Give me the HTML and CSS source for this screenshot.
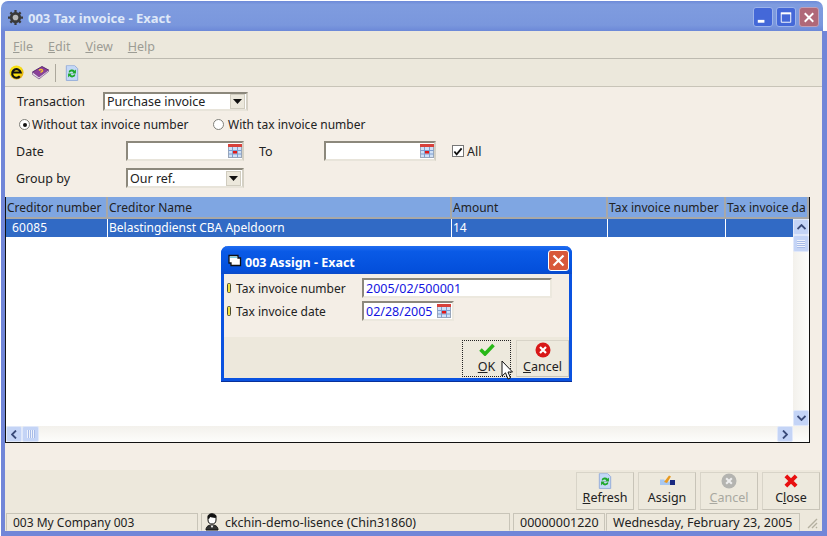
FILE: index.html
```html
<!DOCTYPE html>
<html lang="en">
<head>
<meta charset="utf-8">
<title>003 Tax invoice - Exact</title>
<link rel="stylesheet" href="styles.css">
</head>
<body>
<svg class="defs" width="0" height="0" aria-hidden="true">
  <defs>
    <symbol id="cal" viewBox="0 0 14 14">
      <rect x="0.5" y="0.5" width="13" height="13" fill="#cfe0f6" stroke="#9aa6b8"/>
      <rect x="0" y="0" width="14" height="3" fill="#d8413a"/>
      <path d="M0.5 6.5H13.5M0.5 10H13.5M4.5 3V13.5M9.5 3V13.5" stroke="#7f9fd0" fill="none"/>
      <rect x="5" y="7" width="4" height="2.5" fill="#e01818"/>
    </symbol>
    <symbol id="arrow" viewBox="0 0 9 5"><path d="M0 0H9L4.500 5Z" fill="#111"/></symbol>
    <symbol id="refresh" viewBox="0 0 16 18">
      <path d="M1.500 0.500H11L14.500 4V17.500H1.500Z" fill="#c4d8f6" stroke="#8fa8d8"/>
      <path d="M4 8A4 4 0 0 1 11 6.500L12.500 5V9.500H8L9.500 8A2.500 2.500 0 0 0 5.500 8.500Z" fill="#1fa82c"/>
      <path d="M12 11A4 4 0 0 1 5 12.500L3.500 14V9.500H8L6.500 11A2.500 2.500 0 0 0 10.500 10.500Z" fill="#1fa82c"/>
    </symbol>
    <symbol id="pin" viewBox="0 0 4 10"><rect x="0.500" y="0.500" width="3" height="9" rx="1" fill="#f2e23c" stroke="#4a4a30"/></symbol>
  </defs>
</svg>

<div class="desktop">
  <section class="window">
    <header class="titlebar">
      <svg class="app-icon" width="15" height="15" viewBox="0 0 16 16"><circle cx="8" cy="8" r="6" fill="#3a3a3a"/><path d="M8 0V16M0 8H16M2.500 2.500L13.500 13.500M13.500 2.500L2.500 13.500" stroke="#3a3a3a" stroke-width="2.400"/><circle cx="8" cy="8" r="3" fill="#b8b8b8"/></svg>
      <span class="title-text">003 Tax invoice - Exact</span>
      <div class="win-buttons">
        <button class="win-btn"><svg width="19" height="19" viewBox="0 0 19 19"><rect x="4" y="12" width="7" height="3" fill="#fff"/></svg></button>
        <button class="win-btn"><svg width="19" height="19" viewBox="0 0 19 19"><path d="M4.500 5.500H14.500V14.500H4.500Z" fill="none" stroke="#fff"/><rect x="4" y="4" width="11" height="2" fill="#fff"/></svg></button>
        <button class="win-btn win-close"><svg width="19" height="19" viewBox="0 0 19 19"><path d="M5 5L14 14M14 5L5 14" stroke="#fff" stroke-width="2"/></svg></button>
      </div>
    </header>

    <div class="window-body">
      <nav class="menubar">
        <span class="menu-item"><u>F</u>ile</span>
        <span class="menu-item"><u>E</u>dit</span>
        <span class="menu-item"><u>V</u>iew</span>
        <span class="menu-item"><u>H</u>elp</span>
      </nav>

      <div class="toolbar">
        <svg class="tool-e" width="15" height="15" viewBox="0 0 16 16"><defs><radialGradient id="ball" cx="40%" cy="35%" r="70%"><stop offset="0.6" stop-color="#f8e010"/><stop offset="1" stop-color="#e0a010"/></radialGradient></defs><circle cx="8" cy="8" r="7.500" fill="url(#ball)"/><path d="M2.500 8H12.500A4.600 4.600 0 1 0 11.500 12" fill="none" stroke="#111" stroke-width="2.200"/></svg>
        <svg class="tool-book" width="17" height="15" viewBox="0 0 17 15"><path d="M0.500 7L10 1.500L16.500 5L7 13.500Z" fill="#8b3f98" stroke="#5a2a70"/><path d="M0.500 7V9.500L7 14L16.500 6.500V5L7 12Z" fill="#e9d8ec" stroke="#6a3a80" stroke-width="0.600"/><path d="M7 5.500C8 4 11 4 10.500 6L8.500 7.500" fill="none" stroke="#f0c030" stroke-width="1.400"/></svg>
        <span class="tool-sep"></span>
        <svg width="14" height="16" viewBox="0 0 16 18"><use href="#refresh"/></svg>
      </div>

      <form class="filters">
        <div class="row row-transaction">
          <label class="lbl lbl-trans">Transaction</label>
          <div class="combo combo-trans"><span class="combo-val">Purchase invoice</span><span class="combo-btn"><svg width="9" height="5"><use href="#arrow"/></svg></span></div>
        </div>
        <div class="row row-radio">
          <span class="radio radio-on"></span><span class="radio-text radio-text-1">Without tax invoice number</span>
          <span class="radio radio-second"></span><span class="radio-text">With tax invoice number</span>
        </div>
        <div class="row row-date">
          <label class="lbl lbl-date">Date</label>
          <div class="date-in date-main"><svg width="14" height="14"><use href="#cal"/></svg></div>
          <label class="lbl lbl-to">To</label>
          <div class="date-in date-second"><svg width="14" height="14"><use href="#cal"/></svg></div>
          <span class="check"><svg width="11" height="11" viewBox="0 0 11 11"><path d="M1.500 5.500L4 8.500L9.500 2" fill="none" stroke="#111" stroke-width="2"/></svg></span>
          <span class="check-text">All</span>
        </div>
        <div class="row row-group">
          <label class="lbl lbl-date">Group by</label>
          <div class="combo combo-group"><span class="combo-val">Our ref.</span><span class="combo-btn"><svg width="9" height="5"><use href="#arrow"/></svg></span></div>
        </div>
      </form>

      <div class="grid">
        <div class="grid-head">
          <div class="th">Creditor number</div>
          <div class="th">Creditor Name</div>
          <div class="th">Amount</div>
          <div class="th">Tax invoice number</div>
          <div class="th">Tax invoice da</div>
        </div>
        <div class="grid-row">
          <div class="td td-first">60085</div>
          <div class="td">Belastingdienst CBA Apeldoorn</div>
          <div class="td">14</div>
          <div class="td"></div>
          <div class="td"></div>
        </div>
        <div class="vscroll">
          <span class="sb-btn"><svg width="9" height="6" viewBox="0 0 9 6"><path d="M0.500 5L4.500 1L8.500 5" fill="none" stroke="#3a4a78" stroke-width="1.800"/></svg></span>
          <span class="sb-thumb sb-thumb-v"></span>
          <span class="sb-fill"></span>
          <span class="sb-btn"><svg width="9" height="6" viewBox="0 0 9 6"><path d="M0.500 1L4.500 5L8.500 1" fill="none" stroke="#3a4a78" stroke-width="1.800"/></svg></span>
        </div>
        <div class="hscroll">
          <span class="sb-btn"><svg width="6" height="9" viewBox="0 0 6 9"><path d="M5 0.500L1 4.500L5 8.500" fill="none" stroke="#3a4a78" stroke-width="1.800"/></svg></span>
          <span class="sb-thumb sb-thumb-h"></span>
          <span class="sb-fill"></span>
          <span class="sb-btn"><svg width="6" height="9" viewBox="0 0 6 9"><path d="M1 0.500L5 4.500L1 8.500" fill="none" stroke="#3a4a78" stroke-width="1.800"/></svg></span>
        </div>
      </div>

      <div class="actions">
        <button class="act-btn"><svg width="14" height="16" viewBox="0 0 16 18"><use href="#refresh"/></svg><span><u>R</u>efresh</span></button>
        <button class="act-btn"><svg width="17" height="16" viewBox="0 0 17 16"><path d="M1 12V6.500H5L7 8.500H12V12Z" fill="#a8c8f0"/><path d="M5 9L10 2.500L12 3.500L8 10Z" fill="#e89a20"/><rect x="11" y="7" width="5" height="5" fill="#1a2a80"/></svg><span>Assi<u>g</u>n</span></button>
        <button class="act-btn act-disabled"><svg width="16" height="16" viewBox="0 0 17 17"><circle cx="8.500" cy="8.500" r="8" fill="#b4b4b0"/><path d="M5.500 5.500L11.500 11.500M11.500 5.500L5.500 11.500" stroke="#eee" stroke-width="2.200"/></svg><span><u>C</u>ancel</span></button>
        <button class="act-btn"><svg width="14" height="14" viewBox="0 0 15 15"><path d="M2 2L13 13M13 2L2 13" stroke="#e81010" stroke-width="4.200"/></svg><span>C<u>l</u>ose</span></button>
      </div>

      <footer class="statusbar">
        <div class="panel panel-company">003 My Company 003</div>
        <div class="panel panel-user">
          <svg width="16" height="18" viewBox="0 0 16 18"><path d="M4 3C5 0 11 0 12 3V7C12 10 10 11 8 11C6 11 4 10 4 7Z" fill="#fff" stroke="#111"/><path d="M4 6C3 1 7 0.500 9 1C12 1 13 4 11.500 5C9 5 7 4 6 4C6 5 5 6 4 6Z" fill="#111"/><path d="M2 17C2 13 5 12 8 12C11 12 14 13 14 17Z" fill="#333" stroke="#111"/><path d="M6.500 12.500L8 15L9.500 12.500Z" fill="#fff"/></svg>
          <span>ckchin-demo-lisence (Chin31860)</span>
        </div>
        <div class="panel panel-code">00000001220</div>
        <div class="panel panel-date">Wednesday, February 23, 2005</div>
        <svg class="grip" width="13" height="13" viewBox="0 0 13 13"><path d="M12 3L3 12M12 7L7 12M12 11L11 12" stroke="#b4b0a0" stroke-width="1.400"/></svg>
      </footer>
    </div>
  </section>

  <section class="dialog">
    <header class="dlg-title">
      <svg width="14" height="13" viewBox="0 0 14 13"><path d="M1 1.500H10V4H12.500V11.500H3V9H1Z" fill="#fff" stroke="#111" stroke-width="1.300"/><rect x="2" y="2.500" width="7" height="1.500" fill="#7fd0e0"/></svg>
      <span class="dlg-title-text">003 Assign - Exact</span>
      <button class="dlg-close"><svg width="15" height="15" viewBox="0 0 15 15"><path d="M2.500 2.500L12.500 12.500M12.500 2.500L2.500 12.500" stroke="#fff" stroke-width="2.200"/></svg></button>
    </header>
    <div class="dlg-body">
      <div class="dlg-row">
        <svg class="pin" width="4" height="10"><use href="#pin"/></svg>
        <label class="dlg-label">Tax invoice number</label>
        <div class="dlg-input dlg-input-wide">2005/02/500001</div>
      </div>
      <div class="dlg-row">
        <svg class="pin" width="4" height="10"><use href="#pin"/></svg>
        <label class="dlg-label">Tax invoice date</label>
        <div class="dlg-input dlg-input-date"><span>02/28/2005</span><svg width="14" height="14"><use href="#cal"/></svg></div>
      </div>
    </div>
    <div class="dlg-foot">
      <button class="dlg-btn dlg-ok"><svg width="16" height="13" viewBox="0 0 16 13"><path d="M1.500 6.500L6 11L14.500 2" fill="none" stroke="#28b818" stroke-width="3.600"/></svg><span><u>O</u>K</span></button>
      <button class="dlg-btn dlg-cancel"><svg width="16" height="16" viewBox="0 0 16 16"><circle cx="8" cy="8" r="7.500" fill="#d81818"/><path d="M5 5L11 11M11 5L5 11" stroke="#fff" stroke-width="2.200"/></svg><span><u>C</u>ancel</span></button>
    </div>
  </section>

  <svg class="cursor" width="13" height="21" viewBox="0 0 13 21"><path d="M1 1V16L4.500 12.800L7 19L9.500 18L7 12H11.500Z" fill="#fff" stroke="#111"/></svg>
</div>
</body>
</html>
```
FILE: styles.css
```css
* { box-sizing: border-box; }
html, body { margin: 0; padding: 0; }
body {
  width: 827px;
  height: 536px;
  overflow: hidden;
  font-family: "Noto Sans", "DejaVu Sans", sans-serif;
  font-size: 12.5px;
  color: #222;
}
.defs { position: absolute; }
button { font: inherit; color: inherit; padding: 0; }
u { text-decoration: underline; }

.desktop {
  position: relative;
  width: 827px;
  height: 536px;
  background: #fff;
  overflow: hidden;
}

/* main window */
.window {
  position: absolute;
  left: 1px;
  top: 1px;
  width: 826px;
  height: 535px;
  display: flex;
  flex-direction: column;
}
.titlebar {
  width: 822px;
  height: 30px;
  flex: none;
  padding: 2px 4px 0 7px;
  display: flex;
  align-items: center;
  gap: 5px;
  background: linear-gradient(#6d8ad8 0, #7f9cdf 12%, #7a97dd 80%, #6c88d8 100%);
  border-radius: 7px 7px 0 0;
  color: #dfe8f8;
  font-weight: 700;
  font-size: 13px;
}
.title-text { flex: 1; padding-top: 1px; }
.win-buttons { display: flex; gap: 3px; }
.win-btn {
  width: 20px;
  height: 20px;
  border: 1px solid #9db4ea;
  border-radius: 3px;
  background: #4468d8;
  display: flex;
  align-items: center;
  justify-content: center;
}
.win-close { background: #b06878; border-color: #c0a0b8; }

.window-body {
  flex: 1;
  min-height: 0;
  display: flex;
  flex-direction: column;
  background: #f4eee6;
  border-left: 4px solid #7186d8;
  border-right: 5px solid #7186d8;
  border-bottom: 5px solid #7186d8;
}

.menubar {
  height: 28px;
  display: flex;
  align-items: center;
  gap: 15px;
  padding: 4px 0 0 8px;
  background: #ece8dc;
  border-bottom: 1px solid #bdbab0;
  color: #9c9c94;
}
.toolbar {
  height: 28px;
  display: flex;
  align-items: center;
  padding-left: 4px;
  background: #ece8dc;
  border-bottom: 1px solid #c8c4b8;
}
.tool-book { margin-left: 8px; }
.tool-sep { width: 1px; height: 18px; background: #aca89c; margin: 0 9px 0 6px; }

/* filters */
.filters {
  height: 110px;
  display: flex;
  flex-direction: column;
  padding-top: 5px;
}
.row { display: flex; align-items: center; }
.row-transaction { height: 19px; padding-left: 12px; }
.row-radio { height: 17px; margin-top: 5px; padding-left: 14px; font-size: 12px; }
.row-date { height: 20px; margin-top: 8px; padding-left: 11px; }
.row-group { height: 20px; margin-top: 7px; padding-left: 11px; }
.lbl-trans { width: 86px; }
.lbl-date { width: 110px; }
.lbl-to { margin-left: 15px; width: 65px; }
.combo, .date-in {
  display: flex;
  align-items: center;
  background: #fff;
  border: 2px solid #8c887c;
  border-right-color: #d4d0c4;
  border-bottom-color: #e8e4da;
}
.combo-trans { width: 145px; height: 19px; }
.combo-group { width: 118px; height: 20px; }
.combo-val { flex: 1; padding-left: 2px; }
.combo-btn {
  width: 15px;
  height: 15px;
  margin-right: 1px;
  display: flex;
  align-items: center;
  justify-content: center;
  background: #ece8dc;
  border: 1px solid #d0ccbf;
}
.date-main { width: 118px; height: 20px; justify-content: flex-end; }
.date-second { width: 112px; height: 20px; justify-content: flex-end; }
.radio {
  width: 11px;
  height: 11px;
  border: 1px solid #80807a;
  border-radius: 50%;
  background: #fff;
  margin-right: 2px;
  position: relative;
}
.radio-second { margin-right: 4px; }
.radio-on::after {
  content: "";
  position: absolute;
  left: 2.5px;
  top: 2.5px;
  width: 4px;
  height: 4px;
  border-radius: 50%;
  background: #111;
}
.radio-text-1 { width: 181px; }
.check {
  width: 12px;
  height: 12px;
  margin-left: 16px;
  border: 1px solid #777;
  background: #fff;
  display: flex;
  align-items: center;
  justify-content: center;
}
.check-text { margin-left: 3px; }

/* grid */
.grid {
  position: relative;
  width: 805px;
  height: 246px;
  flex: none;
  background: #fff;
  border-left: 1px solid #111;
  border-right: 1px solid #111;
  border-bottom: 1px solid #111;
  overflow: hidden;
  font-size: 12px;
}
.grid-head, .grid-row {
  display: grid;
  grid-template-columns: 102px 344px 156px 118px 83px;
}
.grid-head { height: 22px; background: #c4c0b4; }
.th {
  background: #7fa6e2;
  border-right: 2px solid #a8a8a8;
  border-bottom: 2px solid #a8a8a8;
  padding: 2px 0 0 1px;
  white-space: nowrap;
  overflow: hidden;
  height: 22px;
}
.grid-row { height: 18px; background: #316ac5; color: #fff; width: 787px; }
.td {
  border-right: 1px solid #fff;
  padding-left: 1px;
  line-height: 18px;
  white-space: nowrap;
  overflow: hidden;
}
.td-first { padding-left: 6px; letter-spacing: 0.2px; }
.vscroll {
  position: absolute;
  right: 0;
  top: 22px;
  bottom: 16px;
  width: 16px;
  display: flex;
  flex-direction: column;
  background: linear-gradient(90deg, #f3f1ec, #fdfdfb);
}
.hscroll {
  position: absolute;
  left: 0;
  right: 0;
  bottom: 0;
  height: 16px;
  display: flex;
  background: linear-gradient(#f3f1ec, #fdfdfb);
}
.sb-fill { flex: 1; }
.sb-btn {
  width: 16px;
  height: 16px;
  flex: none;
  display: flex;
  align-items: center;
  justify-content: center;
  background: #c4d4f6;
  border: 1px solid #e0e8fa;
  border-radius: 2px;
}
.hscroll .sb-btn:last-child { margin-right: 16px; }
.sb-thumb { flex: none; border: 1px solid #e0e8fa; border-radius: 2px; }
.sb-thumb-v {
  width: 16px;
  height: 17px;
  background: repeating-linear-gradient(#eef2fc 0 1px, #a8bce8 1px 2px) center / 8px 8px no-repeat, #c4d4f6;
}
.sb-thumb-h {
  width: 17px;
  height: 16px;
  background: repeating-linear-gradient(90deg, #eef2fc 0 1px, #a8bce8 1px 2px) center / 8px 8px no-repeat, #c4d4f6;
}

/* actions */
.actions {
  margin-top: 27px;
  height: 43px;
  flex: none;
  display: flex;
  justify-content: flex-end;
  gap: 4px;
  padding: 2px 2px 0 0;
  background: #ede8dc;
}
.act-btn {
  width: 58px;
  height: 38px;
  display: grid;
  grid-template-rows: 16px 17px;
  justify-items: center;
  align-items: center;
  align-content: start;
  background: #ede9dd;
  border: 1px solid #d8d4c8;
  border-right-color: #c8c4b8;
  border-bottom-color: #c8c4b8;
  line-height: 17px;
  color: #222;
}
.act-disabled { color: #a8a8a0; }

/* status bar */
.statusbar {
  flex: 1;
  display: flex;
  align-items: center;
  gap: 3px;
  padding-left: 1px;
  background: #ede8dc;
}
.panel {
  height: 18px;
  display: flex;
  align-items: center;
  border: 1px solid #c8c4b8;
  border-bottom-color: #ede8dc;
  white-space: nowrap;
}
.panel-company { width: 192px; padding-left: 6px; font-size: 12px; }
.panel-user { width: 309px; padding-left: 2px; gap: 5px; font-size: 12.4px; }
.panel-code { width: 92px; padding-left: 6px; }
.panel-date { width: 194px; padding-left: 6px; margin-left: -2px; }
.grip { margin-left: 2px; }

/* dialog */
.dialog {
  position: absolute;
  left: 221px;
  top: 246px;
  width: 351px;
  height: 135px;
  display: flex;
  flex-direction: column;
  background: #f4eee6;
  border: 3px solid #0a52e0;
  border-top: 0;
  border-radius: 7px 7px 0 0;
  box-shadow: 0 1px 0 #08309a;
}
.dlg-title {
  height: 28px;
  flex: none;
  margin: 0 -3px;
  padding: 0 3px 0 7px;
  display: flex;
  align-items: center;
  gap: 3px;
  background: linear-gradient(#1f6cf0 0, #0a5ae6 20%, #0450dc 85%, #0c4ac8 100%);
  border-radius: 7px 7px 0 0;
  color: #fff;
  font-weight: 700;
  font-size: 12.5px;
}
.dlg-title-text { flex: 1; padding-top: 4px; }
.dlg-close {
  width: 21px;
  height: 21px;
  display: flex;
  align-items: center;
  justify-content: center;
  background: #d8583a;
  border: 1px solid #fff;
  border-radius: 3px;
}
.dlg-body {
  height: 63px;
  flex: none;
  padding-top: 4px;
  display: flex;
  flex-direction: column;
  gap: 3px;
}
.dlg-row { height: 20px; display: flex; align-items: center; padding-left: 3px; }
.pin { flex: none; }
.dlg-label { width: 126px; margin-left: 5px; font-size: 12px; }
.dlg-input {
  height: 20px;
  display: flex;
  align-items: center;
  background: #fff;
  color: #1414e0;
  border: 2px solid #8c887c;
  border-right-color: #ece8de;
  border-bottom-color: #ece8de;
  padding-left: 2px;
}
.dlg-input-wide { width: 190px; }
.dlg-input-date { width: 92px; justify-content: space-between; padding-right: 1px; }
.dlg-foot {
  flex: 1;
  background: #ede8dc;
  display: flex;
  justify-content: flex-end;
  align-items: flex-start;
  gap: 5px;
  padding-top: 3px;
}
.dlg-btn {
  height: 37px;
  display: grid;
  grid-template-rows: 17px 17px;
  justify-items: center;
  align-items: center;
  align-content: start;
  background: #ede9dd;
  border: 1px solid #d8d4c8;
  border-right-color: #c8c4b8;
  border-bottom-color: #c8c4b8;
  line-height: 17px;
}
.dlg-ok { width: 49px; border: 1px dotted #222; }
.dlg-cancel { width: 53px; }

.cursor { position: absolute; left: 501px; top: 360px; }
```
